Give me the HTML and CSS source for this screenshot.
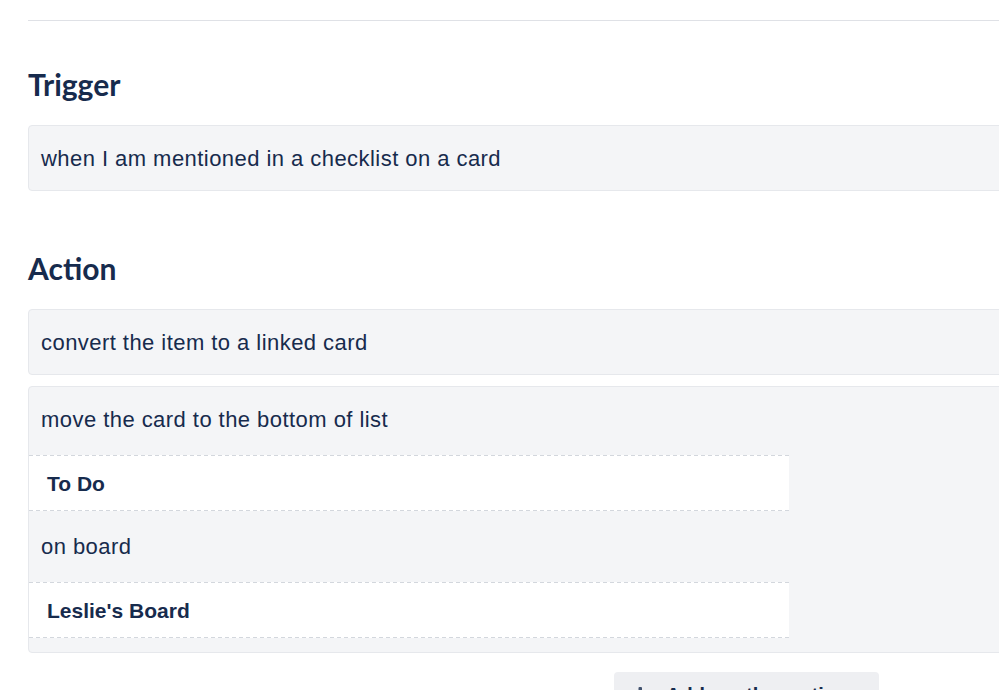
FILE: index.html
```html
<!DOCTYPE html>
<html lang="en">
<head>
    <meta charset="UTF-8">
    <title>Rule details</title>
    <link rel="stylesheet" href="styles.css">
</head>
<body>

    <div class="page">
        <div class="divider"></div>

        <h2 class="section-title">Trigger</h2>
        <div class="rule-box">
            <div class="phrase">when I am mentioned in a checklist on a card</div>
        </div>

        <h2 class="section-title action-title">Action</h2>
        <div class="rule-box">
            <div class="phrase">convert the item to a linked card</div>
        </div>
        <div class="rule-box">
            <div class="phrase">move the card to the bottom of list</div>
            <div class="picker">To Do</div>
            <div class="phrase">on board</div>
            <div class="picker">Leslie's Board</div>
        </div>

        <div class="add-row">
            <button class="add-button">
                <svg class="plus" width="16" height="16" viewBox="0 0 16 16">
                    <rect x="6.5" y="0" width="3.5" height="16" rx="1"/>
                    <rect x="0" y="6.5" width="16" height="3.5" rx="1"/>
                </svg>
                Add another action
            </button>
        </div>
    </div>

</body>
</html>
```

FILE: styles.css
```css
html, body {
    overflow: hidden;
}
body {
    margin: 0;
    padding: 0;
    background-color: #fff;
    color: #172b4d;
    font-family: "Liberation Sans", Arial, sans-serif;
}
.page {
    width: 1437px;
    padding: 20px 0 0 28px;
}
.divider {
    border-top: 1px solid #dfe1e6;
}
.section-title {
    font-family: Lato, "Open Sans", sans-serif;
    font-weight: 700;
    font-size: 30px;
    line-height: 36px;
    margin: 45px 0 23px;
}
.action-title {
    margin-top: 59px;
}
.rule-box {
    background-color: #f4f5f7;
    border: 1px solid #e6e8ec;
    border-radius: 4px;
    padding: 21px 0 19px;
    margin-bottom: 11px;
}
.rule-box .phrase {
    font-size: 22px;
    letter-spacing: 0.45px;
    line-height: 24px;
    padding: 0 12px;
}
/* dashed edges drawn as gradients so the dashes come out 4px long */
.picker {
    width: 724px;
    margin: 23px 0 24px;
    padding: 2px 18px 0;
    background-color: #fff;
    background-image:
        repeating-linear-gradient(to right, #d3d7dd 0 4px, transparent 4px 7px),
        repeating-linear-gradient(to right, #d3d7dd 0 4px, transparent 4px 7px);
    background-size: 100% 1px;
    background-position: top left, bottom left;
    background-repeat: no-repeat;
    font-size: 21px;
    font-weight: bold;
    line-height: 54px;
}
.rule-box .phrase + .picker + .phrase + .picker {
    margin-top: 23px;
}
.rule-box .picker:last-child {
    margin-bottom: -5px;
}
.add-row {
    display: flex;
    justify-content: center;
    margin-top: 19px;
}
.add-button {
    display: flex;
    align-items: center;
    gap: 18px;
    width: 265px;
    padding: 11px 0 11px 18px;
    background-color: #eeeff2;
    border: none;
    border-radius: 4px;
    color: #172b4d;
    font-family: "Liberation Sans", Arial, sans-serif;
    font-size: 20px;
    font-weight: bold;
    line-height: 24px;
}
.plus {
    fill: #42526e;
}
```
